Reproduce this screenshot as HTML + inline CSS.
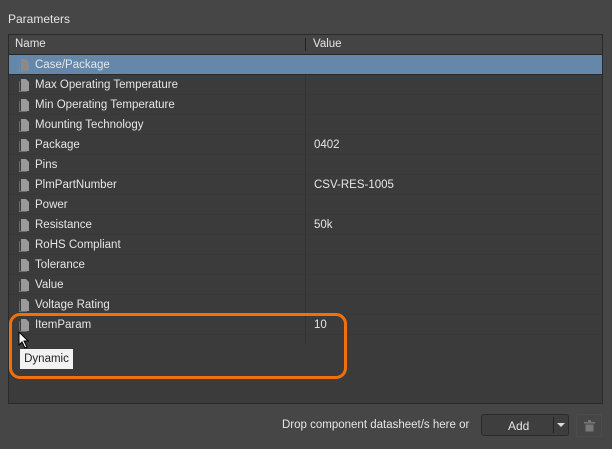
<!DOCTYPE html><html><head><style>
body{margin:0;width:612px;height:449px;background:#464646;font-family:"Liberation Sans",sans-serif;font-size:11.5px;color:#e6e6e6;position:relative;overflow:hidden}
.abs{position:absolute}
.panel{left:8px;top:34px;width:595px;height:370px;background:#3b3b3b;border:1px solid #2a2a2a;box-sizing:border-box}
.hdr{left:9px;top:35px;width:593px;height:19px;background:#444;border-bottom:1px solid #262626}
.row{left:9px;width:593px;height:20px;border-bottom:1px solid #383838;box-sizing:border-box}
.t{position:absolute;left:26px;top:4px}
.v{position:absolute;left:305px;top:4px}
.ic{position:absolute;left:10px;top:4px;width:10px;height:13px}
</style></head><body>
<div class="abs" style="left:8px;top:12px;font-size:12px">Parameters</div>
<div class="abs panel"></div>
<div class="abs hdr"><span class="abs" style="left:6px;top:3px">Name</span><span class="abs" style="left:296px;top:3px;width:1px;height:13px;background:#222"></span><span class="abs" style="left:304px;top:3px">Value</span></div>
<div class="abs" style="left:305px;top:55px;width:1px;height:290px;background:#333"></div>
<div id="rows"></div>
<div class="abs" style="left:9px;top:313px;width:338px;height:66px;border:3px solid #f07010;border-radius:11px;box-sizing:border-box"></div>
<svg class="abs" style="left:18px;top:331px" width="14" height="18"><path d="M1 1 L1 14 L4 11 L7 17 L9 16 L6 10 L10 10 Z" fill="#fff" stroke="#000" stroke-width="1"/></svg>
<div class="abs" style="left:20px;top:349px;width:53px;height:20px;background:#f2f2f2;color:#222;font-size:11.5px;line-height:20px;text-align:center">Dynamic</div>
<div class="abs" style="left:282px;top:419px">Drop component datasheet/s here or</div>
<div class="abs" style="left:481px;top:414px;width:88px;height:22px;background:#3e3e3e;border:1px solid #2a2a2a;border-radius:3px;box-sizing:border-box"><span class="abs" style="left:26px;top:4px;font-size:12px">Add</span><span class="abs" style="left:71px;top:2px;width:1px;height:16px;background:#222"></span><span class="abs" style="left:75px;top:8px;border:4px solid transparent;border-top:4px solid #ddd"></span></div>
<div class="abs" style="left:576px;top:414px;width:26px;height:23px;border:1px solid #4c4c4c;box-sizing:border-box"><svg class="abs" style="left:7px;top:5px" width="11" height="12"><rect x="0" y="2" width="11" height="1.5" fill="#777"/><rect x="4" y="0" width="3" height="2" fill="#777"/><rect x="1.5" y="4.5" width="8" height="7" fill="#777"/></svg></div>
<script>
var r=[["Case/Package",""],["Max Operating Temperature",""],["Min Operating Temperature",""],["Mounting Technology",""],["Package","0402"],["Pins",""],["PlmPartNumber","CSV-RES-1005"],["Power",""],["Resistance","50k"],["RoHS Compliant",""],["Tolerance",""],["Value",""],["Voltage Rating",""],["ItemParam","10"]];
var h="";r.forEach(function(x,i){var sel=i==0;h+='<div class="abs row" style="top:'+(55+i*20)+'px;'+(sel?'background:#6487aa;border-bottom:1px solid #2a2a2a':'')+'"><svg class="ic" viewBox="0 0 10 13"><path d="M2 0H7L10 3V12H2Z" fill="'+(sel?'#8a8a8a':'#9a9a9a')+'"/><path d="M0 2V13H8" stroke="#888" fill="none" stroke-width="1.2"/></svg><span class="t">'+x[0]+'</span><span class="v">'+x[1]+'</span></div>'});
document.getElementById("rows").innerHTML=h;
</script>
</body></html>
